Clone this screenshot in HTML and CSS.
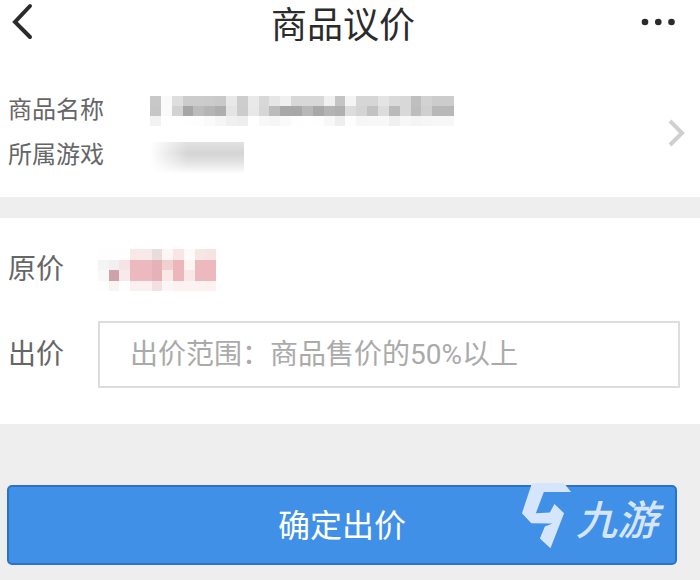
FILE: index.html
```
<!DOCTYPE html>
<html lang="zh-CN">
<head>
  <meta charset="UTF-8">
  <meta name="viewport" content="width=device-width, initial-scale=1.0">
  <title>商品议价</title>
  <link rel="stylesheet" href="styles.css">
</head>
<body>
  <header class="topbar">
    <button type="button" class="icon-btn" aria-label="返回">
      <svg width="24" height="38" viewBox="0 0 24 38" fill="none" stroke="#2b2b2b" stroke-width="4" stroke-linecap="round" stroke-linejoin="miter">
        <path d="M20 3 L5 19 L20 34"/>
      </svg>
    </button>
    <h1>商品议价</h1>
    <button type="button" class="icon-btn" aria-label="更多">
      <svg width="36" height="8" viewBox="0 0 36 8" fill="#2b2b2b">
        <circle cx="5" cy="4" r="3.3"/>
        <circle cx="18.3" cy="4" r="3.3"/>
        <circle cx="31.5" cy="4" r="3.3"/>
      </svg>
    </button>
  </header>

  <a class="product" href="#">
    <dl>
      <dt>商品名称</dt>
      <dd><svg class="mask-name" id="mask-name" viewBox="0 0 28 3" preserveAspectRatio="none" shape-rendering="crispEdges"></svg></dd>
      <dt>所属游戏</dt>
      <dd><div class="mask-game"></div></dd>
    </dl>
    <svg width="18" height="28" viewBox="0 0 18 28" fill="none" stroke="#cfcfcf" stroke-width="4">
      <path d="M2 2 L14 14 L2 26"/>
    </svg>
  </a>

  <form class="offer" id="offer-form">
    <div class="row">
      <span class="label">原价</span>
      <svg class="mask-price" id="mask-price" viewBox="0 0 11 4" preserveAspectRatio="none" shape-rendering="crispEdges"></svg>
    </div>
    <div class="row">
      <label class="label" for="offer">出价</label>
      <input type="text" id="offer" placeholder="出价范围：商品售价的50%以上">
    </div>
  </form>

  <div class="submit">
    <button type="submit" form="offer-form">确定出价</button>
    <div class="watermark">
      <svg width="51" height="67" viewBox="60 38 152 202" fill="#d5e5fb">
        <path d="M92 42 L188 40 L210 68 L128 68 L104 132 L146 130 L160 104 L189 132 L148 238 L116 208 L131 172 L154 163 L90 162 L62 132 Z"/>
      </svg>
      <span>九游</span>
    </div>
  </div>

  <script>
    // mosaic over the hidden values, one colour per cell
    const drawMosaic = (id, rows) => {
      const svg = document.getElementById(id);
      let cells = '';
      rows.forEach((row, y) => {
        row.split(' ').forEach((c, x) => {
          const color = c.length === 2 ? c + c + c : c;
          cells += `<rect x="${x}" y="${y}" width="1" height="1" fill="#${color}"/>`;
        });
      });
      svg.innerHTML = cells;
    }

    drawMosaic('mask-name', [
      'c8 fa de cc cc cb c9 e8 cd e9 d8 e6 f0 d8 d8 d8 f0 c4 f4 d6 d6 e4 da d8 bf d2 cc cc',
      'c6 fa d2 a6 bc b5 ae e4 cc e8 d6 bc a8 a8 b8 a8 b4 b0 dc d4 c2 dc ba d8 bd cf b8 b8',
      'f2 ff ff fe fd fa f6 f0 ee ff f8 f6 fa fe ff fe f8 ee fd f6 f7 f8 f0 f7 f4 f6 f7 f7'
    ]);
    drawMosaic('mask-price', [
      'fe fe fe f8e8e8 f8e8e8 e8dcdc fdf6f6 f8e6e6 fefafa f6e6e6 f6e4e4',
      'f4 f0 f4e4e6 ebb9bf ebb9bf e5b2b8 f2d0d2 ecb6bb fdf4f4 ecb9be ecb9be',
      'f8 cda3a9 f6eaea ebb9bf ebb9bf e5b2b8 fae8e8 ecb6bb f8e8e8 ecb9be ecb9be',
      'fe f8f4f4 fe faf0f0 faf0f0 f2e0e2 fdf6f6 fcf2f2 fcf2f2 fcf2f2 fcf2f2'
    ]);
  </script>
</body>
</html>
```
FILE: styles.css
```
* {
  box-sizing: border-box;
}
body {
  margin: 0;
  font-family: Roboto, "Noto Sans CJK SC", sans-serif;
  background-color: #eee;
  color: #666;
}
button {
  font-family: inherit;
  cursor: pointer;
}
.topbar {
  display: flex;
  align-items: flex-start;
  justify-content: space-between;
  height: 76px;
  padding: 0 24px 0 10px;
  background: #fff;
}
.topbar h1 {
  margin: 0;
  font-size: 36px;
  line-height: 52px;
  font-weight: 400;
  color: #2b2b2b;
}
.icon-btn {
  display: flex;
  align-items: center;
  width: 36px;
  height: 44px;
  padding: 0;
  border: none;
  background: none;
}
.product {
  display: flex;
  align-items: center;
  justify-content: space-between;
  padding: 12px 14px 19px 8px;
  background: #fff;
  color: inherit;
  text-decoration: none;
}
.product dl {
  display: grid;
  grid-template-columns: 142px auto;
  margin: 0;
  font-size: 24px;
  line-height: 45px;
}
.product dd {
  display: flex;
  align-items: center;
  margin: 0;
}
.mask-name {
  width: 304px;
  height: 30px;
}
.mask-game {
  width: 94px;
  height: 32px;
  margin-top: 4px;
  background:
    linear-gradient(to right, #fff, transparent 40%),
    linear-gradient(#e2e2e2, #d5d5d5 35%, #e0e0e0 60%, #fff);
}
.offer {
  display: flex;
  flex-direction: column;
  gap: 30px;
  margin-top: 21px;
  padding: 31px 20px 36px 8px;
  background: #fff;
}
.row {
  display: flex;
  align-items: center;
}
.label {
  flex: none;
  width: 90px;
  font-size: 28px;
  line-height: 40px;
}
.mask-price {
  width: 118px;
  height: 42px;
}
.row input {
  flex: 1;
  min-width: 0;
  height: 67px;
  padding: 0 30px;
  border: 2px solid #ddd;
  border-radius: 0;
  font-family: inherit;
  font-size: 28px;
  color: #444;
}
.row input::placeholder {
  color: #aaa;
}
.submit {
  position: relative;
  padding: 61px 23px 15px 7px;
}
.submit button {
  width: 100%;
  height: 80px;
  padding: 0 0 4px;
  border: 2px solid #2a72cc;
  border-radius: 5px;
  background: #4090e8;
  color: #fff;
  font-size: 32px;
}
/* brand mark on top of the button */
.watermark {
  position: absolute;
  top: 58px;
  right: 42px;
  display: flex;
  align-items: flex-start;
  gap: 4px;
  color: #d5e5fb;
  font-size: 41px;
  line-height: 78px;
  font-weight: 500;
  font-style: italic;
  pointer-events: none;
}
```
